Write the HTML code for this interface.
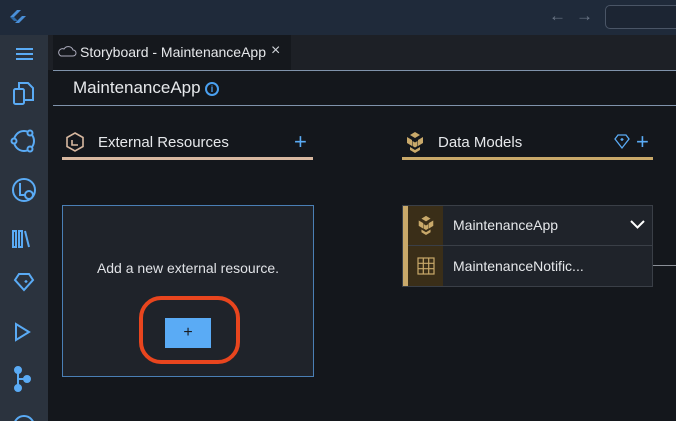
<!DOCTYPE html>
<html><head><style>
*{margin:0;padding:0;box-sizing:border-box}
body{width:676px;height:421px;overflow:hidden;background:#14171c;font-family:"Liberation Sans",sans-serif;position:relative}
.a{position:absolute}
</style></head><body>
<div class="a" style="left:0;top:0;width:676px;height:35px;background:#1f2a3a"></div>
<svg class="a" style="top:7px;left:8px" width="20" height="20" viewBox="0 0 20 20"><path d="M2 10l7-7h4l-7 7zM7 16l7-7h4l-7 7z" fill="#4a8fd8"/><path d="M2 10l4 4h4l-4-4z" fill="#2d6aa8"/></svg>
<div class="a" style="left:549px;top:6px;color:#6b7686;font-size:17px">←</div>
<div class="a" style="left:576px;top:6px;color:#6b7686;font-size:17px">→</div>
<div class="a" style="left:605px;top:5px;width:80px;height:24px;border:1px solid #4a5566;border-radius:5px;background:#1c2533"></div>
<div class="a" style="left:0;top:35px;width:48px;height:386px;background:#2b333e"></div>
<div class="a" style="left:48px;top:35px;width:628px;height:35px;background:#1d2026"></div>
<div class="a" style="left:53px;top:35px;width:238px;height:35px;background:#15181d"></div>
<svg class="a" style="left:57px;top:46px" width="20" height="12"><path d="M4 10h12a3 3 0 0 0 0-6 5 5 0 0 0-9-1 3.5 3.5 0 0 0-3 7z" fill="none" stroke="#aab" stroke-width="1"/></svg>
<div class="a" style="left:80px;top:44px;color:#e6e8eb;font-size:14px">Storyboard - MaintenanceApp</div>
<div class="a" style="left:271px;top:42px;color:#cfd3d8;font-size:16px">×</div>
<div class="a" style="left:53px;top:70px;width:623px;height:1px;background:#8093ab"></div>
<div class="a" style="left:53px;top:105px;width:623px;height:1px;background:#8093ab"></div>
<div class="a" style="left:73px;top:78px;color:#e6e8eb;font-size:17px">MaintenanceApp</div>
<div class="a" style="left:205px;top:82px;width:14px;height:14px;border:2px solid #4aa0f0;border-radius:50%;color:#4aa0f0;font-size:9px;font-weight:bold;text-align:center;line-height:10px">i</div>
<!-- sidebar icons -->
<div class="a" style="left:16px;top:48px;width:17px;height:1.5px;background:#5aabf5;box-shadow:0 5px 0 #5aabf5,0 10px 0 #5aabf5"></div>
<svg class="a" style="left:10px;top:80px" width="28" height="341" viewBox="0 0 28 341" fill="none" stroke="#5aabf5" stroke-width="2">
<rect x="4" y="9" width="10" height="15" rx="1.5"/><path d="M9 9V3h9l5 5v12h-9"/>
<circle cx="14" cy="61" r="10"/><circle cx="20" cy="53" r="2.5" fill="#2b333e"/><circle cx="4" cy="61" r="2.5" fill="#2b333e"/><circle cx="20" cy="69" r="2.5" fill="#2b333e"/>
<circle cx="14" cy="110" r="11"/><path d="M10 103v12h5"/><circle cx="19" cy="115" r="4"/>
<rect x="3" y="151" width="3" height="16"/><rect x="9" y="151" width="3" height="16"/><path d="M15 151l4 16"/>
<path d="M5 200l4-6h10l4 6-9 10z"/><path d="M16 200v3M14.5 201.5h3" stroke-width="1.3"/>
<path d="M6 244v16l13-8z"/>
<circle cx="8" cy="290" r="3" fill="#5aabf5"/><circle cx="17" cy="299" r="3" fill="#5aabf5"/><circle cx="8" cy="308" r="3" fill="#5aabf5"/><path d="M8 290v18M8 299h9"/>
<circle cx="14" cy="346" r="10"/>
</svg>
<!-- External resources -->
<svg class="a" style="left:64px;top:131px" width="22" height="22" viewBox="0 0 22 22" fill="none" stroke="#d8b8a0" stroke-width="1.6"><path d="M11 2l8 4.5v9L11 20l-8-4.5v-9z"/><path d="M8 9v5h6"/></svg>
<div class="a" style="left:98px;top:134px;color:#e6e8eb;font-size:15px">External Resources</div>
<div class="a" style="left:294px;top:129px;color:#5aabf5;font-size:22px">+</div>
<div class="a" style="left:62px;top:157px;width:251px;height:3px;background:#d8b8a0"></div>
<div class="a" style="left:62px;top:205px;width:252px;height:172px;background:#1f232a;border:1.5px solid #4a7fb5"></div>
<div class="a" style="left:62px;top:260px;width:252px;text-align:center;color:#e0e2e6;font-size:14px">Add a new external resource.</div>
<div class="a" style="left:139px;top:296px;width:101px;height:68px;border:4px solid #e8451e;border-radius:22px"></div>
<div class="a" style="left:165px;top:318px;width:46px;height:30px;background:#5aabf5;color:#1a1d22;text-align:center;font-size:16px;line-height:30px">+</div>
<!-- Data models -->
<svg class="a" style="left:404px;top:131px" width="22" height="22" viewBox="0 0 22 22" fill="#c9a96a"><path d="M11 1l5 3-5 3-5-3zM3 6l5 3v6l-5-3zM19 6l-5 3v6l5-3zM6 16l5 3 5-3v3l-5 3-5-3z"/><path d="M8.5 10l2.5 1.5 2.5-1.5v5l-2.5 1.5-2.5-1.5z"/></svg>
<div class="a" style="left:438px;top:134px;color:#e6e8eb;font-size:15px">Data Models</div>
<svg class="a" style="left:614px;top:134px" width="16" height="16" viewBox="0 0 16 16" fill="none" stroke="#5aabf5" stroke-width="1.3"><path d="M1 5l3-4h8l3 4-7 9z"/><path d="M8 4v3M6.5 5.5h3"/></svg>
<div class="a" style="left:636px;top:129px;color:#5aabf5;font-size:22px">+</div>
<div class="a" style="left:402px;top:157px;width:251px;height:3px;background:#c9a96a"></div>
<div class="a" style="left:402px;top:205px;width:251px;height:82px;background:#1f232a;border:1px solid #3a3f47"></div>
<div class="a" style="left:403px;top:245px;width:249px;height:1px;background:#3a3f47"></div>
<div class="a" style="left:403px;top:206px;width:5px;height:80px;background:#c9a96a"></div>
<div class="a" style="left:408px;top:206px;width:35px;height:39px;background:#3a2e18"></div>
<div class="a" style="left:408px;top:246px;width:35px;height:40px;background:#3a2e18"></div>
<svg class="a" style="left:416px;top:215px" width="20" height="20" viewBox="0 0 22 22" fill="#c9a96a"><path d="M11 1l5 3-5 3-5-3zM3 6l5 3v6l-5-3zM19 6l-5 3v6l5-3zM6 16l5 3 5-3v3l-5 3-5-3z"/><path d="M8.5 10l2.5 1.5 2.5-1.5v5l-2.5 1.5-2.5-1.5z"/></svg>
<svg class="a" style="left:417px;top:257px" width="18" height="18" viewBox="0 0 18 18" fill="none" stroke="#c9a96a" stroke-width="1.2"><rect x="1" y="1" width="16" height="16"/><path d="M6.3 1v16M11.7 1v16M1 6.3h16M1 11.7h16"/></svg>
<div class="a" style="left:453px;top:217px;color:#e6e8eb;font-size:14px">MaintenanceApp</div>
<svg class="a" style="left:630px;top:220px" width="15" height="10"><path d="M1 1l6.5 6.5L14 1" fill="none" stroke="#fff" stroke-width="2"/></svg>
<div class="a" style="left:453px;top:258px;color:#e6e8eb;font-size:14px">MaintenanceNotific...</div>
<div class="a" style="left:653px;top:265px;width:23px;height:1px;background:#8a8f97"></div>
</body></html>
